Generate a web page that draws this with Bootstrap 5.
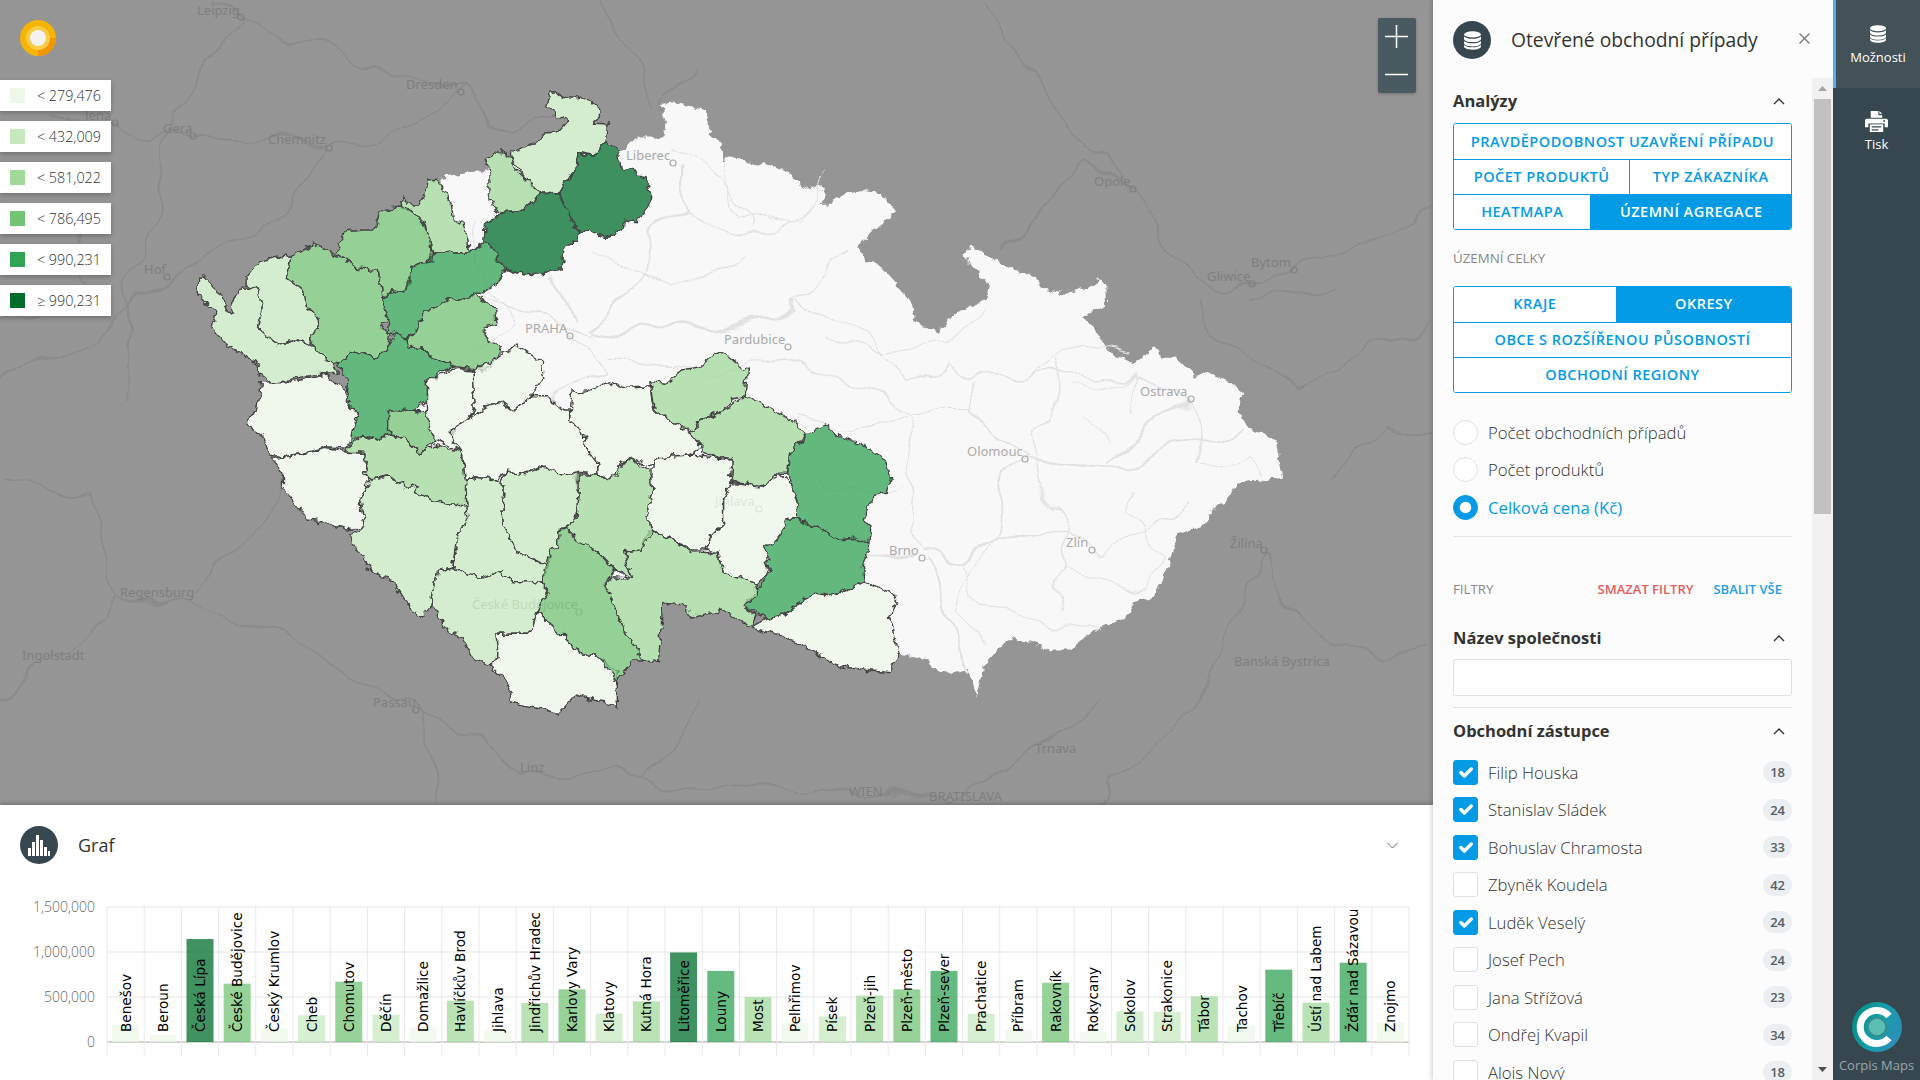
<!DOCTYPE html>
<html lang="cs">
<head>
  <meta charset="utf-8">
  <meta name="viewport" content="width=device-width, initial-scale=1">
  <title>Corpis Maps</title>
  <link href="https://cdn.jsdelivr.net/npm/bootstrap@5.3.3/dist/css/bootstrap.min.css" rel="stylesheet">
  <script src="https://cdn.jsdelivr.net/npm/bootstrap@5.3.3/dist/js/bootstrap.bundle.min.js"></script>
  <style>
    html, body { height: 100%; margin: 0; overflow: hidden; }
    body { font-family: "Open Sans", "Liberation Sans", sans-serif; color: #444; background: #fff; }

    .app-shell { height: 1080px; }
    .main-col { width: 1433px; flex: none; }

    /* map */
    .map-pane { height: 805px; background: #959595; overflow: hidden; }
    .map-canvas { display: block; width: 1433px; height: 805px; }
    .map-label { font-family: "Noto Sans", "Open Sans", sans-serif; font-size: 13px; }
    .map-logo { position: absolute; left: 20px; top: 20px; width: 36px; height: 36px; }
    .map-legend { position: absolute; left: 0; top: 80px; gap: 10px; }
    .legend-item { width: 111px; height: 31px; padding-left: 10px; background: #fff; box-shadow: 0 2px 5px rgba(0,0,0,.25); font-size: 14.300px; font-weight: 300; color: #333; }
    .legend-swatch { width: 15px; height: 15px; margin-right: 12px; }
    .zoom-box { position: absolute; left: 1378px; top: 18px; width: 38px; height: 75px; background: #4a5a61; border-radius: 2px; box-shadow: 0 1px 3px rgba(0,0,0,.25); }

    /* chart */
    .chart-pane { height: 275px; background: #fff; box-shadow: 0 -2px 4px rgba(0,0,0,.2); position: relative; }
    .chart-head { height: 80px; padding: 20px 35px 20px 20px; }
    .round-icon { width: 38px; height: 38px; flex: none; border-radius: 50%; background: #37474f; }
    .chart-title { margin-left: 20px; font-size: 18px; color: #333; }
    .chart-canvas { display: block; width: 1433px; height: 195px; }

    /* right panel */
    .side-panel { width: 400px; flex: none; background: #fcfcfc; box-shadow: -2px 0 4px rgba(0,0,0,.15); position: relative; }
    .panel-head { height: 78px; padding: 2px 23px 0 20px; flex: none; }
    .panel-title { margin-left: 20px; font-size: 19.300px; line-height: 1; color: #333; }
    .panel-close { margin-bottom: 4px; }
    .panel-body { min-height: 0; }
    .panel-scroll { width: 379px; flex: none; padding: 6px 20px 0; overflow: hidden; }
    .scroll-track { width: 21px; flex: none; background: #f1f1f1; }
    .scroll-arrow { height: 21px; }
    .scroll-thumb { width: 17px; height: 415px; margin-left: 2px; background: #c1c1c1; }

    .section-head { height: 34px; font-size: 16.500px; font-weight: 700; color: #333; }
    .chev-up { margin-right: 7px; }
    .seg-box { border: 1px solid #039be5; border-radius: 3px; overflow: hidden; }
    .seg-first { margin-top: 5px; }
    .seg-row { height: 35px; }
    .seg-row + .seg-row { border-top: 1px solid #039be5; }
    .seg-btn { flex: 1 1 0; height: 100%; padding: 0; border: 0; border-radius: 0; font-size: 14.500px; font-weight: 600; letter-spacing: .5px; color: #039be5; background: #fff; text-transform: uppercase; }
    .seg-btn + .seg-btn { border-left: 1px solid #039be5; }
    .seg-btn.active, .seg-btn.active:hover { background: #039be5; color: #fff; border-color: #039be5; }
    .seg-half { flex: 0 0 52%; }
    .seg-left { flex: 0 0 40.500%; }
    .seg-kraje { flex: 0 0 48%; }
    .caption-gray { font-size: 13.300px; color: #888; }
    .caption-row { height: 20px; }
    .caption-top { margin-top: 19px; margin-bottom: 16.500px; }
    .radio-gap { height: 21px; }

    .opt-row { height: 37.500px; font-size: 16.700px; font-weight: 300; color: #333; margin: 0; }
    .opt-row .form-check-input { width: 25px; height: 25px; margin: 0 10px 0 0; flex: none; border: 1px solid #e2e2e2; background-color: #fff; }
    .opt-row .form-check-input:checked { background-color: #039be5; border-color: #039be5; }
    .opt-row .form-check-input[type=checkbox] { border-radius: 3px; }
    .opt-on { color: #039be5; font-weight: 400; }
    .count-pill { margin-left: auto; padding: 4px 7px; border-radius: 11px; background: #eceff1; color: #546067; font-size: 13px; font-weight: 600; line-height: 14px; }
    .panel-rule { margin: 0; border: 0; border-top: 1px solid #e4e4e4; opacity: 1; }
    .rule-a { margin-top: 10px; }
    .rule-b { margin-top: 11px; margin-bottom: 6px; }
    .filter-row { margin-top: 43px; }
    .name-head { margin-top: 21px; }
    .name-input { height: 37px; margin-top: 4px; border-radius: 2px; border-color: #e0e0e0; }
    .agent-list { margin-top: 5.500px; }
    .link-red { color: #e35d5d; font-size: 13px; font-weight: 600; }
    .link-blue { color: #1e9fe8; font-size: 13px; font-weight: 600; margin: 0 10px 0 20px; }

    /* icon rail */
    .icon-rail { width: 87px; flex: none; background: #37474f; color: #fff; font-size: 13px; }
    .rail-item { height: 88px; padding-top: 25px; }
    .rail-item.active { background: #435259; border-left: 3px solid #4db2f7; }
    .rail-label { margin-top: 5px; }
    .rail-print { padding-top: 22px; }
    .rail-print span { margin-top: 2px; }
    .rail-foot { margin-top: auto; padding-bottom: 5px; color: #9aa6ab; }
  </style>
</head>
<body>
<div class="app-shell d-flex">
  <div class="main-col d-flex flex-column">
    <div class="map-pane position-relative">
      <svg class="map-canvas" id="mapSvg" viewBox="0 0 1433 805">
        <defs>
          <filter id="rough" filterUnits="userSpaceOnUse" x="0" y="0" width="1433" height="805" color-interpolation-filters="sRGB">
            <feTurbulence type="fractalNoise" baseFrequency="0.13" numOctaves="2" seed="4" result="n"/>
            <feDisplacementMap in="SourceGraphic" in2="n" scale="9" xChannelSelector="R" yChannelSelector="G"/>
          </filter>
          <filter id="wavy" filterUnits="userSpaceOnUse" x="0" y="0" width="1433" height="805" color-interpolation-filters="sRGB">
            <feTurbulence type="fractalNoise" baseFrequency="0.02" numOctaves="2" seed="9" result="n"/>
            <feDisplacementMap in="SourceGraphic" in2="n" scale="40" xChannelSelector="R" yChannelSelector="G"/>
          </filter>
        </defs>
        <g id="roadsOut" fill="none" stroke="#8a8a8a" stroke-width="1.800" stroke-linejoin="round" filter="url(#wavy)"></g>
        <g id="labelsOut" class="map-label" fill="#7f7f7f"></g>
        <g id="landBase" fill="#f8f8f8" filter="url(#rough)"></g>
        <g id="roadsIn" fill="none" stroke="#e2e2e2" stroke-width="1.400" stroke-linejoin="round" filter="url(#wavy)"></g>
        <g id="labelsIn" class="map-label" fill="#aaa"></g>
        <g id="districts" stroke="#444" stroke-width="1.400" stroke-linejoin="round" filter="url(#rough)"></g>
      </svg>
      <svg class="map-logo" viewBox="0 0 36 36">
        <circle cx="18" cy="18" r="18" fill="#f5b400"/>
        <path d="M18 36a18 18 0 0 0 18-18h-6a12 12 0 0 1-12 12z" fill="#ef9600"/>
        <circle cx="18" cy="18" r="12" fill="#f8cb45"/>
        <circle cx="18" cy="18" r="8" fill="#f2f2f0"/>
      </svg>
      <div class="map-legend d-flex flex-column" id="legend"></div>
      <div class="zoom-box">
        <svg width="38" height="75" viewBox="0 0 38 75" stroke="#fff" stroke-width="1.500">
          <path d="M7 18.500h23M18.500 7v23"/>
          <path d="M7 56.500h23"/>
        </svg>
      </div>
    </div>
    <div class="chart-pane">
      <div class="chart-head d-flex align-items-center">
        <div class="round-icon d-flex align-items-center justify-content-center">
          <svg width="22" height="22" viewBox="0 0 22 22" fill="#fff"><rect x="0" y="14" width="3" height="8"/><rect x="4" y="8" width="3" height="14"/><rect x="8" y="1" width="3" height="21"/><rect x="12" y="6" width="3" height="16"/><rect x="16" y="13" width="3" height="9"/><rect x="20" y="17" width="2" height="5"/></svg>
        </div>
        <div class="chart-title">Graf</div>
        <svg class="ms-auto" width="11" height="7" viewBox="0 0 11 7" fill="none" stroke="#666" stroke-width="1"><path d="M.5 1l5 5 5-5"/></svg>
      </div>
      <svg class="chart-canvas" id="chartSvg" viewBox="0 885 1433 195"></svg>
    </div>
  </div>

  <div class="side-panel d-flex flex-column">
    <div class="panel-head d-flex align-items-center">
      <div class="round-icon d-flex align-items-center justify-content-center">
        <svg width="19" height="19" viewBox="0 0 18 18" fill="#fff"><ellipse cx="9" cy="3.200" rx="8" ry="3"/><path d="M1 5.200v2.300c0 1.700 3.600 3 8 3s8-1.300 8-3V5.200c-1.600 1.500-4.700 2.200-8 2.200s-6.400-.7-8-2.200z"/><path d="M1 9.400v2.300c0 1.700 3.600 3 8 3s8-1.300 8-3V9.400c-1.600 1.500-4.700 2.200-8 2.200s-6.400-.7-8-2.200z"/><path d="M1 13.200v1.600c0 1.700 3.600 3 8 3s8-1.300 8-3v-1.600c-1.600 1.500-4.700 2.200-8 2.200s-6.400-.7-8-2.200z"/></svg>
      </div>
      <div class="panel-title">Otevřené obchodní případy</div>
      <svg class="ms-auto panel-close" width="11" height="11" viewBox="0 0 11 11" stroke="#777" stroke-width="1.300"><path d="M.5.500l10 10M10.500.500l-10 10"/></svg>
    </div>
    <div class="panel-body d-flex flex-grow-1">
      <div class="panel-scroll">
        <div class="section-head d-flex align-items-center justify-content-between">
          <span>Analýzy</span>
          <svg class="chev-up" width="12" height="7" viewBox="0 0 12 7" fill="none" stroke="#333" stroke-width="1.400"><path d="M1 6l5-5 5 5"/></svg>
        </div>
        <div class="seg-box seg-first">
          <div class="seg-row d-flex"><button class="btn seg-btn">Pravděpodobnost uzavření případu</button></div>
          <div class="seg-row d-flex"><button class="btn seg-btn seg-half">Počet produktů</button><button class="btn seg-btn">Typ zákazníka</button></div>
          <div class="seg-row d-flex"><button class="btn seg-btn seg-left">Heatmapa</button><button class="btn seg-btn active">Územní agregace</button></div>
        </div>
        <div class="caption-row caption-gray caption-top d-flex align-items-center">ÚZEMNÍ CELKY</div>
        <div class="seg-box">
          <div class="seg-row d-flex"><button class="btn seg-btn seg-kraje">Kraje</button><button class="btn seg-btn active">Okresy</button></div>
          <div class="seg-row d-flex"><button class="btn seg-btn">Obce s rozšířenou působností</button></div>
          <div class="seg-row d-flex"><button class="btn seg-btn">Obchodní regiony</button></div>
        </div>
        <div class="radio-gap"></div>
        <label class="opt-row d-flex align-items-center"><input class="form-check-input" type="radio" name="metric"><span>Počet obchodních případů</span></label>
        <label class="opt-row d-flex align-items-center"><input class="form-check-input" type="radio" name="metric"><span>Počet produktů</span></label>
        <label class="opt-row d-flex align-items-center"><input class="form-check-input" type="radio" name="metric" checked><span class="opt-on">Celková cena (Kč)</span></label>
        <hr class="panel-rule rule-a">
        <div class="caption-row filter-row d-flex align-items-center">
          <span class="caption-gray me-auto">FILTRY</span>
          <span class="link-red">SMAZAT FILTRY</span>
          <span class="link-blue">SBALIT VŠE</span>
        </div>
        <div class="section-head name-head d-flex align-items-center justify-content-between">
          <span>Název společnosti</span>
          <svg class="chev-up" width="12" height="7" viewBox="0 0 12 7" fill="none" stroke="#333" stroke-width="1.400"><path d="M1 6l5-5 5 5"/></svg>
        </div>
        <input class="form-control name-input" type="text">
        <hr class="panel-rule rule-b">
        <div class="section-head d-flex align-items-center justify-content-between">
          <span>Obchodní zástupce</span>
          <svg class="chev-up" width="12" height="7" viewBox="0 0 12 7" fill="none" stroke="#333" stroke-width="1.400"><path d="M1 6l5-5 5 5"/></svg>
        </div>
        <div class="agent-list" id="agentList"></div>
      </div>
      <div class="scroll-track d-flex flex-column">
        <div class="scroll-arrow d-flex align-items-center justify-content-center"><svg width="9" height="5" viewBox="0 0 9 5"><path d="M0 5L4.500 0 9 5z" fill="#a3a3a3"/></svg></div>
        <div class="scroll-thumb"></div>
        <div class="scroll-arrow d-flex align-items-center justify-content-center mt-auto"><svg width="9" height="5" viewBox="0 0 9 5"><path d="M0 0l4.500 5L9 0z" fill="#505050"/></svg></div>
      </div>
    </div>
  </div>

  <div class="icon-rail d-flex flex-column">
    <div class="rail-item active d-flex flex-column align-items-center">
      <svg width="18" height="18" viewBox="0 0 18 18" fill="#fff"><ellipse cx="9" cy="3.200" rx="8" ry="3"/><path d="M1 5.200v2.300c0 1.700 3.600 3 8 3s8-1.300 8-3V5.200c-1.600 1.500-4.700 2.200-8 2.200s-6.400-.7-8-2.200z"/><path d="M1 9.400v2.300c0 1.700 3.600 3 8 3s8-1.300 8-3V9.400c-1.600 1.500-4.700 2.200-8 2.200s-6.400-.7-8-2.200z"/><path d="M1 13.200v1.600c0 1.700 3.600 3 8 3s8-1.300 8-3v-1.600c-1.600 1.500-4.700 2.200-8 2.200s-6.400-.7-8-2.200z"/></svg>
      <span class="rail-label">Možnosti</span>
    </div>
    <div class="rail-item rail-print d-flex flex-column align-items-center">
      <svg width="23" height="23" viewBox="0 0 24 24" fill="#fff"><path d="M6 1h8v4.500h4V8H6z"/><path d="M15 1l3 3h-3z"/><path d="M2 9h20a2 2 0 0 1 2 2v7h-3.500v-4h-17v4H0v-7a2 2 0 0 1 2-2z"/><path d="M5 15h14v8H5z"/><path d="M7 17h10v1.300H7zM7 20h7v1.300H7z" fill="#37474f"/><circle cx="20" cy="11.500" r="1" fill="#37474f"/></svg>
      <span>Tisk</span>
    </div>
    <div class="rail-foot d-flex flex-column align-items-center">
      <svg width="50" height="50" viewBox="0 0 50 50">
        <defs>
          <linearGradient id="logoFill" x1="0" y1="0" x2="1" y2="0.400"><stop offset="0" stop-color="#00897b"/><stop offset=".6" stop-color="#12a0ab"/><stop offset="1" stop-color="#2a8fb5"/></linearGradient>
        </defs>
        <circle cx="25" cy="25" r="25" fill="url(#logoFill)"/>
        <path d="M37 14a16.500 16.500 0 1 0 0 22" fill="none" stroke="#fff" stroke-width="7"/>
        <circle cx="25" cy="25" r="9.500" fill="#5cbdb5" stroke="#2f9190" stroke-width="2.500"/>
      </svg>
      <span class="mt-1">Corpis Maps</span>
    </div>
  </div>
</div>

<script>
  const NS='http://www.w3.org/2000/svg';
  function el(tag, attrs, parent, text){
    const node=document.createElementNS(NS, tag);
    for(const key in attrs){ node.setAttribute(key, attrs[key]); }
    if(text){ node.textContent=text; }
    parent.appendChild(node);
    return node;
  }
  const scale=['#edf8e9','#c7e9c0','#a1d99b','#74c476','#31a354','#006d2c'];
  const limits=[279476,432009,581022,786495,990231];

  // Coordinates were read off three crops, so each block has its own origin and scale
  const viewN={ox:180, oy:80, fx:2.8, fy:3};
  const viewS={ox:240, oy:340, fx:2.306, fy:3};
  const viewE={ox:500, oy:100, fx:1.96, fy:2.529};
  function pts(str, v){
    return str.trim().split(/\s+/).map(p=>{
      const c=p.split(',');
      return ((+c[0]/v.fx+v.ox).toFixed(1))+','+((+c[1]/v.fy+v.oy).toFixed(1));
    }).join(' ');
  }

  const districtData=[
    [viewN,1,'1045,35 1075,52 1100,55 1130,50 1135,58 1170,75 1175,110 1160,130 1197,132 1190,185 1155,225 1115,218 1105,270 1060,342 1010,338 975,305 930,240 925,218 1005,185 1018,160 1060,155 1085,125 1050,105 1035,85 1025,85 1040,40'],
    [viewN,5,'1190,185 1225,205 1240,275 1265,262 1280,285 1305,290 1315,345 1315,380 1280,425 1245,420 1240,445 1195,475 1165,465 1145,450 1118,460 1060,342 1105,270 1115,218 1155,225'],
    [viewN,5,'1010,340 1060,342 1118,460 1115,490 1090,490 1075,515 1070,565 1025,580 965,585 920,570 885,540 885,510 850,490 855,430 905,395 960,390 990,365'],
    [viewN,2,'855,240 900,215 925,230 935,265 1010,335 990,365 960,390 905,395 880,385 865,340 865,275'],
    [viewN,2,'695,300 720,298 735,320 760,370 765,415 795,430 805,475 810,515 770,520 740,510 705,520 700,480 680,430 650,395 625,385 620,350 640,375 665,375 690,340'],
    [viewN,3,'620,375 650,395 680,430 700,480 705,545 650,560 640,610 630,635 595,630 565,655 555,570 500,565 470,545 435,520 465,455 510,450 545,450 560,390 600,385'],
    [viewN,3,'370,490 435,522 470,545 500,565 555,570 565,655 580,720 560,735 590,765 585,795 555,835 490,812 440,850 430,855 395,820 375,800 365,760 390,745 385,710 355,685 345,630 300,595 310,530'],
    [viewN,4,'705,522 740,510 770,520 810,515 850,490 885,510 890,545 915,570 885,610 845,640 820,640 800,660 755,655 700,690 680,700 665,750 635,775 605,760 580,755 585,720 565,660 595,630 630,635 650,560 700,545'],
    [viewN,3,'820,640 880,680 885,735 850,745 865,780 900,800 895,830 860,870 815,865 770,860 695,825 680,800 640,805 635,775 665,750 680,700 755,655 800,660'],
    [viewN,1,'300,525 310,530 300,595 345,630 355,685 385,710 390,745 365,760 375,800 320,780 275,795 220,745 230,680 215,625 185,615 185,590 220,545'],
    [viewN,1,'50,595 85,595 95,625 120,645 125,675 140,700 150,660 175,620 215,625 230,680 220,745 275,795 320,780 375,800 395,820 430,855 440,880 375,885 255,908 220,880 215,850 125,790 90,745 100,700 45,640'],
    [viewS,4,'224,69 265,33 318,54 344,15 360,-21 385,-6 390,24 422,21 434,45 496,81 459,96 454,114 430,120 430,185 400,215 375,205 345,215 345,285 310,300 280,285 255,305 260,260 275,230 245,180 250,135'],
    [viewS,0,'15,235 40,215 45,170 50,125 115,125 200,105 240,145 250,190 275,230 260,265 255,305 245,325 200,320 105,352 70,345 55,290 25,265'],
    [viewS,0,'75,355 105,352 200,325 240,335 285,340 295,380 285,400 300,420 275,480 290,560 245,570 190,545 155,540 100,440 100,405'],
    [viewS,2,'245,325 280,290 310,300 345,285 380,295 415,340 445,315 510,335 520,420 520,495 465,490 400,460 410,435 380,440 340,405 300,415 285,400 295,380 285,340 240,335'],
    [viewS,3,'345,215 375,205 400,215 430,215 440,280 450,300 415,340 380,295 345,285'],
    [viewS,0,'430,120 500,85 535,90 540,200 525,240 490,265 490,300 510,335 450,300 440,280 430,215 430,185'],
    [viewS,0,'535,90 590,60 635,15 680,50 695,65 700,115 675,155 670,170 630,215 600,185 565,200 530,235 540,200'],
    [viewS,0,'490,265 530,235 565,200 600,185 630,215 670,170 710,170 745,210 760,210 760,245 795,280 795,320 825,370 825,405 780,400 740,405 700,380 640,405 620,385 590,420 540,410 520,420 510,335 490,300'],
    [viewS,0,'765,160 800,155 855,125 890,145 945,140 955,210 1040,280 1065,320 1040,345 965,350 950,380 890,350 870,400 850,420 825,405 825,370 795,320 795,280 760,245'],
    [viewS,2,'945,125 985,130 1020,90 1060,80 1105,30 1130,55 1170,90 1165,165 1135,180 1115,215 1060,240 1040,280 955,210'],
    [viewS,2,'1040,280 1060,240 1115,215 1165,165 1225,205 1265,235 1305,280 1270,340 1265,400 1245,400 1200,440 1130,425 1135,360 1065,340 1065,320'],
    [viewS,4,'1305,285 1350,255 1380,290 1430,310 1490,360 1500,410 1490,460 1460,470 1440,510 1440,545 1455,560 1450,610 1420,595 1380,600 1340,565 1280,535 1285,490 1265,400 1270,340'],
    [viewS,4,'1260,540 1280,535 1340,565 1380,600 1420,595 1450,610 1445,650 1435,680 1440,725 1410,745 1365,770 1330,760 1285,790 1255,825 1215,835 1160,795 1200,740 1220,690 1210,620 1240,600'],
    [viewS,0,'1440,725 1475,745 1515,770 1500,830 1520,940 1500,995 1380,980 1330,940 1260,890 1200,870 1180,860 1215,835 1255,825 1285,790 1330,760 1365,770 1410,745'],
    [viewS,0,'1130,430 1200,440 1245,400 1275,440 1285,490 1280,535 1260,540 1240,600 1210,620 1220,690 1195,730 1115,700 1105,640 1075,630 1085,590 1115,550 1115,480'],
    [viewS,0,'965,350 1040,345 1135,360 1130,430 1115,480 1115,550 1085,590 1075,630 1040,630 1010,605 950,570 940,520 950,460 950,380'],
    [viewS,2,'940,570 975,585 1010,605 1040,635 1105,640 1115,700 1195,730 1190,770 1160,795 1190,825 1180,860 1110,810 1040,835 1030,795 975,790 965,965 930,960 890,880 860,790 840,735 860,710 905,715 885,635 925,630'],
    [viewS,2,'775,405 825,405 850,420 870,400 890,350 945,390 950,460 940,520 950,570 925,630 885,635 905,715 865,690 820,630 770,595 755,565 775,525 780,460'],
    [viewS,1,'600,420 620,385 640,405 700,380 740,405 780,400 780,460 775,525 755,565 735,570 735,620 715,625 710,680 665,650 640,640 610,565 605,490 610,440'],
    [viewS,1,'520,420 540,410 590,420 610,440 605,490 610,565 640,640 665,650 710,680 695,725 625,725 600,695 555,715 490,685 500,590 525,530'],
    [viewS,1,'300,415 340,405 380,440 410,435 400,460 465,490 520,495 525,530 500,590 490,685 455,695 440,800 420,835 385,790 355,725 300,690 250,590 290,560 275,480'],
    [viewS,1,'455,695 490,685 555,715 600,695 625,725 695,725 710,760 685,815 670,880 590,880 595,950 580,975 540,960 510,890 480,870 440,800'],
    [viewS,0,'590,880 670,880 685,815 790,945 825,945 870,1000 870,1100 835,1085 775,1065 735,1120 620,1085 625,1040 580,980 595,950'],
    [viewS,3,'735,570 755,565 770,595 820,630 865,690 840,735 860,790 890,880 930,960 905,960 870,1025 825,945 790,945 685,815 710,760 695,725 715,625 735,620']
  ];

  // Land without data: the east of the country and one district in the north
  const landShape='315,10 345,5 372,15 395,20 410,45 405,70 425,105 437,125 437,155 455,140 480,155 530,165 565,180 585,210 605,225 630,215 637,250 630,265 650,265 665,240 710,230 745,235 775,280 750,310 715,350 700,370 720,410 745,420 780,470 805,510 815,560 860,590 885,550 905,530 950,505 960,470 925,420 910,390 920,370 965,400 1010,430 1055,450 1065,480 1110,490 1140,480 1170,465 1175,450 1188,465 1190,520 1145,545 1170,590 1195,640 1240,665 1270,645 1285,620 1297,650 1330,655 1365,700 1380,690 1410,700 1440,720 1455,740 1450,790 1465,830 1520,860 1530,925 1535,955 1490,965 1445,970 1420,1020 1395,1035 1385,1070 1325,1100 1310,1180 1285,1255 1245,1270 1225,1310 1160,1345 1115,1390 1080,1390 1010,1360 985,1375 950,1430 935,1510 920,1440 880,1455 850,1440 840,1415 780,1400 690,1300 500,1200 300,1200 0,1300 -200,800 -200,300 150,50 200,105 240,130 265,95 320,95 325,60';
  const northPatch='730,290 800,280 865,275 865,340 880,385 897,397 855,430 845,465 815,480 805,475 790,420 765,415 760,370 735,320';

  const landBase=document.getElementById('landBase');
  el('polygon',{points:pts(landShape,viewE)},landBase);
  el('polygon',{points:pts(northPatch,viewN)},landBase);
  districtData.forEach(d=>el('polygon',{points:pts(d[2],d[0])},landBase));

  const districtLayer=document.getElementById('districts');
  districtData.forEach(d=>el('polygon',{points:pts(d[2],d[0]),fill:scale[d[1]],'fill-opacity':.75},districtLayer));

  // Roads inside the country, crop coordinates of the east view
  const innerRoads=[
    ['190,590 300,570 420,578 550,555 575,530 575,510',3],
    ['355,180 355,270 300,340 290,410 230,510 190,585',2.2],
    ['355,270 440,345 560,310 620,270',1.4],
    ['575,510 640,400 680,380',1.4],
    ['830,1160 900,1165 960,1100 1040,1080 1100,1080',2.6],
    ['830,1180 860,1290 940,1430',2.6],
    ['1030,910 1000,960 960,1090',2.4],
    ['1030,920 1130,940 1240,925 1370,855 1450,820',2.4],
    ['1350,760 1280,810 1190,920',2.4],
    ['1350,760 1370,850 1375,920',1.8],
    ['790,790 820,940 815,1100 830,1160',1.4],
    ['920,700 925,800 1030,910',1.8],
    ['580,660 790,790 930,790',1.4],
    ['1100,660 1075,800 1040,830 1060,980 1100,1080 1110,1200 1080,1300',1.4],
    ['580,510 720,580 800,730',1.4],
    ['800,730 880,660 920,690 1040,690 1230,690',1.4],
    ['1230,690 1330,760 1350,760',1.4],
    ['1120,730 1240,690 1250,790',1.1],
    ['900,1170 950,1280 1060,1310 1170,1340',1.1],
    ['1110,1200 1260,1230 1280,1140 1240,1040 1260,980',1.1],
    ['720,1130 800,1160',2.6],
    ['455,150 470,300 610,290 640,200',1.1],
    ['210,650 420,680 580,660',1.4],
    ['140,590 210,700 100,760',1.8],
    ['190,600 0,520 -50,480',1.8],
    ['100,430 160,560',2.2],
    ['1150,810 1210,860',1.1],
    ['-60,300 -20,450 20,580 -90,660',1.1],
    ['330,120 450,190 500,320',1.1],
    ['170,380 350,500 470,400',1.1],
    ['640,600 760,640 870,620 950,520',1.1],
    ['600,800 700,830 790,790',1.1],
    ['1100,1080 1180,1150 1260,1100 1340,1020',1.1],
    ['960,1090 920,1190 900,1300 960,1380',1.1],
    ['1040,690 1150,620 1240,640',1.1],
    ['1380,920 1470,900 1500,950',1.1],
    ['600,950 720,1000 800,960',1.1],
    ['480,700 500,780 620,830',1.1]
  ];
  const roadsIn=document.getElementById('roadsIn');
  innerRoads.forEach(r=>el('polyline',{points:pts(r[0],viewE),'stroke-width':r[1]},roadsIn));

  // Roads across the border, page coordinates
  const outerRoads=['210,0 240,17 290,40 350,60 400,80 461,92 510,130 560,110','240,17 200,60 170,120 165,200 130,280 120,400','193,136 150,140 115,123 50,120','329,148 280,140 193,136','329,148 290,200 200,260 167,277 100,340 0,370','461,92 400,130 329,148','600,0 640,60 650,110','700,60 660,110 670,140','1133,189 1050,100 980,0','1133,189 1190,280 1252,284 1350,250 1433,200','1000,250 1090,160 1133,189','1200,300 1230,350 1300,390 1433,320','120,593 200,610 300,640 416,710 520,768 640,780 850,792','416,710 430,805','120,593 60,656 0,700','192,593 260,520 300,470','640,780 700,700','850,792 950,803 1040,749','1264,550 1300,620 1380,660 1433,640','1264,550 1200,700 1100,805','1100,700 1040,749','0,480 90,500 120,593','70,230 100,300 0,330','1330,480 1380,420 1433,430','1250,300 1330,290'];
  const roadsOut=document.getElementById('roadsOut');
  outerRoads.forEach(r=>el('polyline',{points:r},roadsOut));

  // name, text x, text y centre, marker x, marker y
  const outerTowns=[['Leipzig',197,11,241,17],['Dresden',406,85,461,92],['Chemnitz',268,140,329,148],['Gera',163,129,193,136],['Jena',85,116,115,123],['Hof',144,270,167,277],['Opole',1094,182,1133,189],['Bytom',1251,263,1294,270],['Gliwice',1207,277,1252,284],['Žilina',1230,544,1264,550],['Banská Bystrica',1234,662],['Passau',373,703,416,710],['Regensburg',120,593],['Ingolstadt',22,656],['Linz',520,768],['Trnava',1035,749],['BRATISLAVA',929,797],['WIEN',849,792]];
  const innerTowns=[['Liberec',626,156,673,163],['PRAHA',525,329,570,336],['Pardubice',724,340,788,347],['Ostrava',1140,392,1191,399],['Olomouc',967,452,1025,459],['Brno',889,551,922,558],['Zlín',1066,543,1092,550],['Jihlava',715,502,759,509],['České Budějovice',472,605,579,612]];
  function drawTowns(list, layer, colour){
    list.forEach(t=>{
      el('text',{x:t[1],y:t[2]+4,stroke:'none'},layer,t[0]);
      if(t[3]){ el('circle',{cx:t[3],cy:t[4],r:3,fill:'none',stroke:colour,'stroke-width':1.2},layer); }
    });
  }
  drawTowns(outerTowns,document.getElementById('labelsOut'),'#7f7f7f');
  drawTowns(innerTowns,document.getElementById('labelsIn'),'#aaa');

  // Legend
  const legendItems=['< 279,476','< 432,009','< 581,022','< 786,495','< 990,231','≥ 990,231'];
  const legend=document.getElementById('legend');
  legendItems.forEach((text,i)=>{
    const row=document.createElement('div');
    row.className='legend-item d-flex align-items-center';
    const swatch=document.createElement('div');
    swatch.className='legend-swatch';
    swatch.style.background=scale[i];
    row.appendChild(swatch);
    row.appendChild(document.createTextNode(text));
    legend.appendChild(row);
  });

  // Bar chart
  const bars=[['Benešov',192000],['Beroun',81000],['Česká Lípa',1144000],['České Budějovice',648000],['Český Krumlov',148000],['Cheb',296000],['Chomutov',670000],['Děčín',303000],['Domažlice',163000],['Havlíčkův Brod',459000],['Jihlava',126000],['Jindřichův Hradec',433000],['Karlovy Vary',585000],['Klatovy',315000],['Kutná Hora',452000],['Litoměřice',995000],['Louny',790000],['Most',500000],['Pelhřimov',211000],['Písek',285000],['Plzeň-jih',515000],['Plzeň-město',585000],['Plzeň-sever',790000],['Prachatice',311000],['Příbram',137000],['Rakovník',659000],['Rokycany',118000],['Sokolov',341000],['Strakonice',337000],['Tábor',507000],['Tachov',185000],['Třebíč',804000],['Ústí nad Labem',437000],['Žďár nad Sázavou',881000],['Znojmo',218000]];
  const chart=document.getElementById('chartSvg');
  const left=107, right=1409, base=1042, band=(right-left)/bars.length, perPx=500000/45;
  [0,500000,1000000,1500000].forEach(v=>{
    const y=base-v/perPx;
    el('line',{x1:left,x2:right,y1:y,y2:y,stroke:v?'#e6e6e6':'#a8a8a8','stroke-width':1},chart);
    el('text',{x:95,y:y+5,'text-anchor':'end','font-size':14,'font-weight':300,fill:'#666','font-family':'Open Sans'},chart,v.toLocaleString('en-US'));
  });
  for(let i=0;i<=bars.length;i++){
    const x=left+i*band;
    el('line',{x1:x,x2:x,y1:907,y2:1056,stroke:'#e9e9e9','stroke-width':1},chart);
  }
  bars.forEach((bar,i)=>{
    const h=bar[1]/perPx, cx=left+(i+.5)*band;
    const step=limits.filter(limit=>bar[1]>=limit).length;
    el('rect',{x:cx-13.5,y:base-h,width:27,height:h,fill:scale[step],'fill-opacity':.75},chart);
    el('text',{transform:`translate(${cx+5} 1032) rotate(-90)`,'font-size':13.6,fill:'#000','font-family':'DejaVu Sans'},chart,bar[0]);
  });

  // Sales agents list
  const agents=[['Filip Houska',18,true],['Stanislav Sládek',24,true],['Bohuslav Chramosta',33,true],['Zbyněk Koudela',42,false],['Luděk Veselý',24,true],['Josef Pech',24,false],['Jana Střížová',23,false],['Ondřej Kvapil',34,false],['Alois Nový',18,false]];
  const agentList=document.getElementById('agentList');
  agents.forEach(a=>{
    const row=document.createElement('label');
    row.className='opt-row d-flex align-items-center';
    const box=document.createElement('input');
    box.type='checkbox';
    box.className='form-check-input';
    box.checked=a[2];
    const name=document.createElement('span');
    name.textContent=a[0];
    const pill=document.createElement('span');
    pill.className='count-pill';
    pill.textContent=a[1];
    row.append(box,name,pill);
    agentList.appendChild(row);
  });
</script>
</body>
</html>
